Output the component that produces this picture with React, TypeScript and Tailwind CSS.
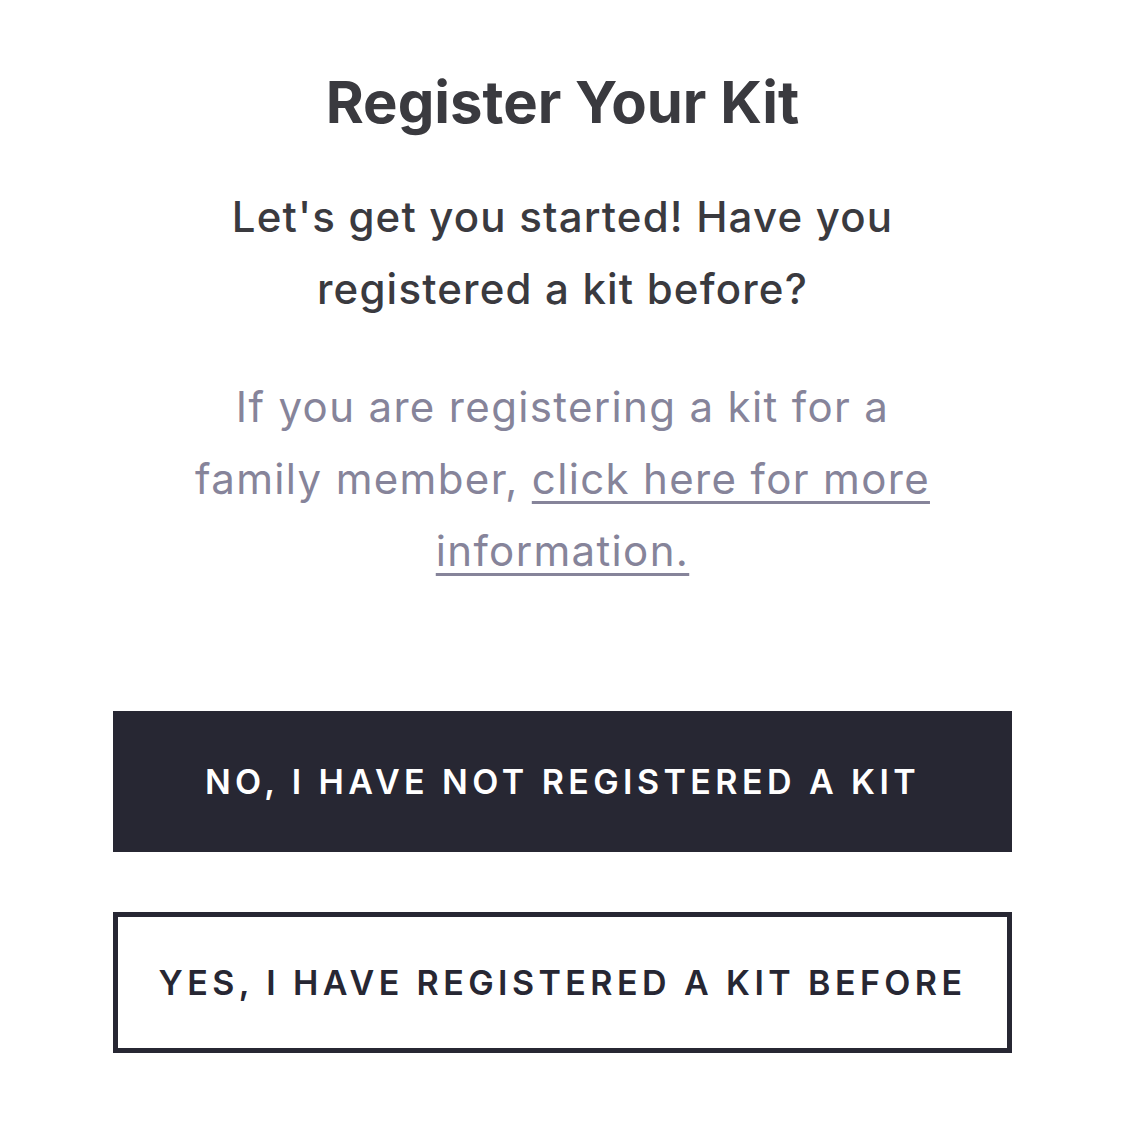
export default function App() {
  return (
    <div className="min-h-[1125px] w-[1125px] bg-white font-['Inter',sans-serif]">
      <div className="flex flex-col items-center px-[113px] pt-[67px]">
        <h1 className="text-[58px] font-bold leading-[70px] text-[#3a3a3f]">Register Your Kit</h1>

        <p className="mt-[44px] max-w-[700px] text-center text-[42px] font-medium leading-[72px] tracking-[0.028em] text-[#3a3a3f]">
          Let's get you started! Have you registered a kit before?
        </p>

        <p className="mt-[46px] max-w-[780px] text-center text-[42px] leading-[72px] tracking-[0.032em] text-[#86849a]">
          If you are registering a kit for a family member,{' '}
          <a href="#" className="underline decoration-[3px] underline-offset-[7px]">
            click here for more information.
          </a>
        </p>

        <div className="mt-[124px] flex w-full flex-col gap-[60px]">
          <button className="h-[141px] w-full bg-[#272733] text-[34px] font-semibold tracking-[0.13em] text-white">
            NO, I HAVE NOT REGISTERED A KIT
          </button>
          <button className="h-[141px] w-full border-[5px] border-[#272733] bg-white text-[34px] font-semibold tracking-[0.13em] text-[#272733]">
            YES, I HAVE REGISTERED A KIT BEFORE
          </button>
        </div>
      </div>
    </div>
  )
}
